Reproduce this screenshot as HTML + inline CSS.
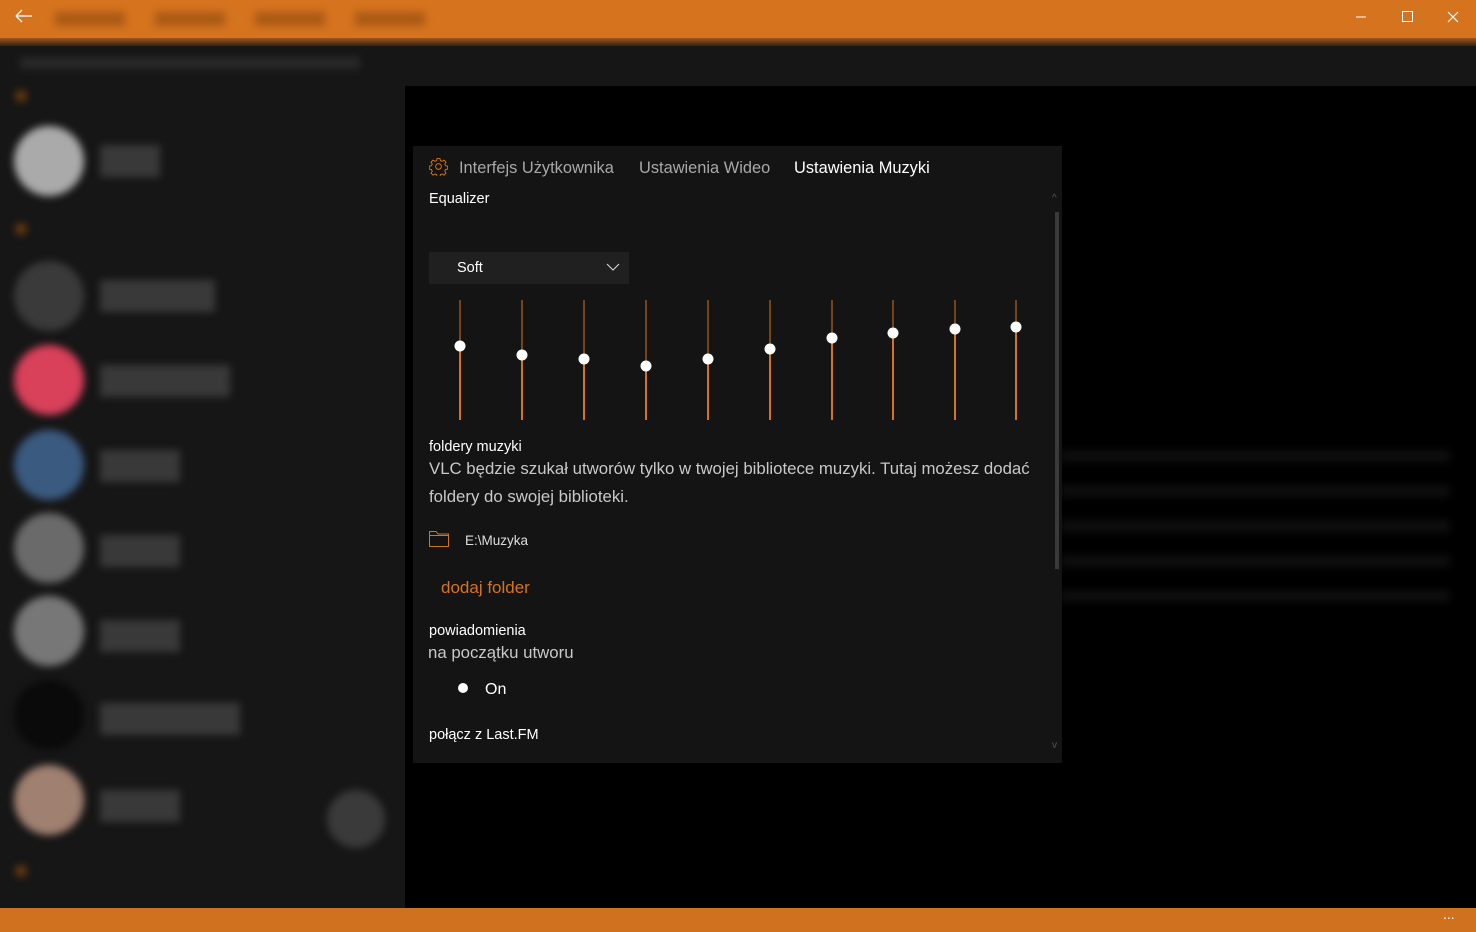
<!DOCTYPE html>
<html><head><meta charset="utf-8"><style>
*{margin:0;padding:0;box-sizing:border-box}
body{width:1476px;height:932px;background:#000;position:relative;overflow:hidden;font-family:"Segoe UI","Liberation Sans",sans-serif;color:#fff}
.abs{position:absolute}
.blur{filter:blur(4px)}
.t{position:absolute;white-space:nowrap}
</style></head><body>
<div class="abs" style="left:0;top:0;width:1476px;height:42px;background:#d5731f"></div>
<div class="abs" style="left:0;top:38px;width:1476px;height:10px;background:linear-gradient(#a0561a,#161616)"></div>
<div class="abs" style="left:0;top:46px;width:1476px;height:40px;background:#161616"></div>
<div class="abs" style="left:0;top:84px;width:405px;height:824px;background:#161616"></div>
<svg class="abs" style="left:14px;top:8px" width="20" height="16"><path d="M2 8H18M2 8L8 2M2 8L8 14" stroke="#fff" stroke-width="1.3" fill="none"/></svg>
<div class="abs blur" style="left:55px;top:12px;width:380px;height:14px;background:repeating-linear-gradient(90deg,rgba(90,45,0,.35) 0 70px,transparent 70px 100px)"></div>
<div class="abs blur" style="left:20px;top:57px;width:340px;height:12px;background:rgba(70,70,70,.4)"></div>
<svg class="abs" style="left:1350px;top:8px" width="120" height="18"><path d="M6 9H16" stroke="#fff"/><rect x="52.5" y="3.5" width="10" height="10" stroke="#fff" fill="none"/><path d="M98 4L108 14M108 4L98 14" stroke="#fff" stroke-width="1.2"/></svg>
<div class="abs blur" style="left:15px;top:90px;width:12px;height:12px;border-radius:50%;background:#6a3a10"></div>
<div class="abs blur" style="left:15px;top:223px;width:12px;height:12px;border-radius:50%;background:#6a3a10"></div>
<div class="abs blur" style="left:15px;top:865px;width:12px;height:12px;border-radius:50%;background:#6a3a10"></div>
<div class="abs blur" style="left:14px;top:126px;width:70px;height:70px;border-radius:50%;background:#aaa"></div>
<div class="abs blur" style="left:14px;top:261px;width:70px;height:70px;border-radius:50%;background:#3a3a3a"></div>
<div class="abs blur" style="left:14px;top:345px;width:70px;height:70px;border-radius:50%;background:#d9405a"></div>
<div class="abs blur" style="left:14px;top:430px;width:70px;height:70px;border-radius:50%;background:#3a5a80"></div>
<div class="abs blur" style="left:14px;top:513px;width:70px;height:70px;border-radius:50%;background:#6a6a6a"></div>
<div class="abs blur" style="left:14px;top:596px;width:70px;height:70px;border-radius:50%;background:#777"></div>
<div class="abs blur" style="left:14px;top:680px;width:70px;height:70px;border-radius:50%;background:#0a0a0a"></div>
<div class="abs blur" style="left:14px;top:765px;width:70px;height:70px;border-radius:50%;background:#a08070"></div>
<div class="abs blur" style="left:327px;top:790px;width:58px;height:58px;border-radius:50%;background:#3a3a3a"></div>
<div class="abs blur" style="left:100px;top:145px;width:60px;height:32px;background:rgba(110,110,110,.4)"></div>
<div class="abs blur" style="left:100px;top:280px;width:115px;height:32px;background:rgba(110,110,110,.4)"></div>
<div class="abs blur" style="left:100px;top:365px;width:130px;height:32px;background:rgba(110,110,110,.4)"></div>
<div class="abs blur" style="left:100px;top:450px;width:80px;height:32px;background:rgba(110,110,110,.4)"></div>
<div class="abs blur" style="left:100px;top:535px;width:80px;height:32px;background:rgba(110,110,110,.4)"></div>
<div class="abs blur" style="left:100px;top:620px;width:80px;height:32px;background:rgba(110,110,110,.4)"></div>
<div class="abs blur" style="left:100px;top:703px;width:140px;height:32px;background:rgba(110,110,110,.4)"></div>
<div class="abs blur" style="left:100px;top:790px;width:80px;height:32px;background:rgba(110,110,110,.4)"></div>
<div class="abs blur" style="left:1060px;top:450px;width:390px;height:160px;background:repeating-linear-gradient(rgba(40,40,40,.35) 0 12px,transparent 12px 35px)"></div>
<div class="abs" style="left:0;top:908px;width:1476px;height:24px;background:#d0711f"></div>
<div class="t" style="left:1443px;top:906px;font-size:14px">...</div>
<div class="abs" style="left:413px;top:146px;width:649px;height:617px;background:#141414"></div>
<svg class="abs" style="left:429px;top:157px" width="19" height="19" viewBox="0 0 20 20"><circle cx="10" cy="10" r="3" stroke="#d5731f" fill="none"/><path d="M8.5 1.5h3l.5 2.3 1.8.8 2-1.3 2.1 2.1-1.3 2 .8 1.8 2.3.5v3l-2.3.5-.8 1.8 1.3 2-2.1 2.1-2-1.3-1.8.8-.5 2.3h-3l-.5-2.3-1.8-.8-2 1.3-2.1-2.1 1.3-2-.8-1.8-2.3-.5v-3l2.3-.5.8-1.8-1.3-2 2.1-2.1 2 1.3 1.8-.8z" stroke="#d5731f" fill="none"/></svg>
<div class="t" style="left:459px;top:159px;font-size:16.4px;color:#a8a8a8">Interfejs Użytkownika</div>
<div class="t" style="left:639px;top:159px;font-size:16.4px;color:#a8a8a8">Ustawienia Wideo</div>
<div class="t" style="left:794px;top:159px;font-size:16.4px;color:#fff">Ustawienia Muzyki</div>
<div class="t" style="left:429px;top:191px;font-size:14.5px">Equalizer</div>
<div class="abs" style="left:429px;top:252px;width:200px;height:32px;background:#202020"></div>
<div class="t" style="left:457px;top:260px;font-size:14.5px">Soft</div>
<svg class="abs" style="left:606px;top:262px" width="14" height="10"><path d="M1 2L7 8L13 2" stroke="#ddd" fill="none"/></svg>
<svg class="abs" style="left:413px;top:290px" width="649" height="140">
<g stroke="#d5731f">
<path d="M47 10V56" stroke-width="1"/><path d="M47 56V130" stroke-width="2"/>
<path d="M109 10V65"/><path d="M109 65V130" stroke-width="2"/>
<path d="M171 10V69"/><path d="M171 69V130" stroke-width="2"/>
<path d="M233 10V76"/><path d="M233 76V130" stroke-width="2"/>
<path d="M295 10V69"/><path d="M295 69V130" stroke-width="2"/>
<path d="M357 10V59"/><path d="M357 59V130" stroke-width="2"/>
<path d="M419 10V48"/><path d="M419 48V130" stroke-width="2"/>
<path d="M480 10V43"/><path d="M480 43V130" stroke-width="2"/>
<path d="M542 10V39"/><path d="M542 39V130" stroke-width="2"/>
<path d="M603 10V37"/><path d="M603 37V130" stroke-width="2"/>
</g>
<g fill="#fff"><circle cx="47" cy="56" r="5.5"/><circle cx="109" cy="65" r="5.5"/><circle cx="171" cy="69" r="5.5"/><circle cx="233" cy="76" r="5.5"/><circle cx="295" cy="69" r="5.5"/><circle cx="357" cy="59" r="5.5"/><circle cx="419" cy="48" r="5.5"/><circle cx="480" cy="43" r="5.5"/><circle cx="542" cy="39" r="5.5"/><circle cx="603" cy="37" r="5.5"/></g>
</svg>
<div class="t" style="left:429px;top:439px;font-size:14.5px">foldery muzyki</div>
<div class="t" style="left:429px;top:455px;font-size:16.8px;color:#c8c8c8;line-height:28px">VLC będzie szukał utworów tylko w twojej bibliotece muzyki. Tutaj możesz dodać<br>foldery do swojej biblioteki.</div>
<svg class="abs" style="left:428px;top:530px" width="22" height="18"><path d="M1.5 16.5V1.5H8l2 2.5h10.5v12.5z M1.5 5.5H20" stroke="#d5731f" fill="none"/></svg>
<div class="t" style="left:465px;top:533px;font-size:13.5px;color:#ddd">E:\Muzyka</div>
<div class="t" style="left:441px;top:578px;font-size:17px;color:#d5731f">dodaj folder</div>
<div class="t" style="left:429px;top:623px;font-size:14.5px">powiadomienia</div>
<div class="t" style="left:428px;top:643px;font-size:16.8px;color:#c8c8c8">na początku utworu</div>
<div class="abs" style="left:458px;top:683px;width:10px;height:10px;border-radius:50%;background:#fff"></div>
<div class="t" style="left:485px;top:681px;font-size:16px">On</div>
<div class="t" style="left:429px;top:727px;font-size:14.5px">połącz z Last.FM</div>
<div class="abs" style="left:1055px;top:212px;width:4px;height:357px;background:#3a3a3a"></div>
<div class="t" style="left:1052px;top:193px;font-size:10px;color:#555">^</div>
<div class="t" style="left:1052px;top:740px;font-size:10px;color:#555">v</div>
</body></html>
